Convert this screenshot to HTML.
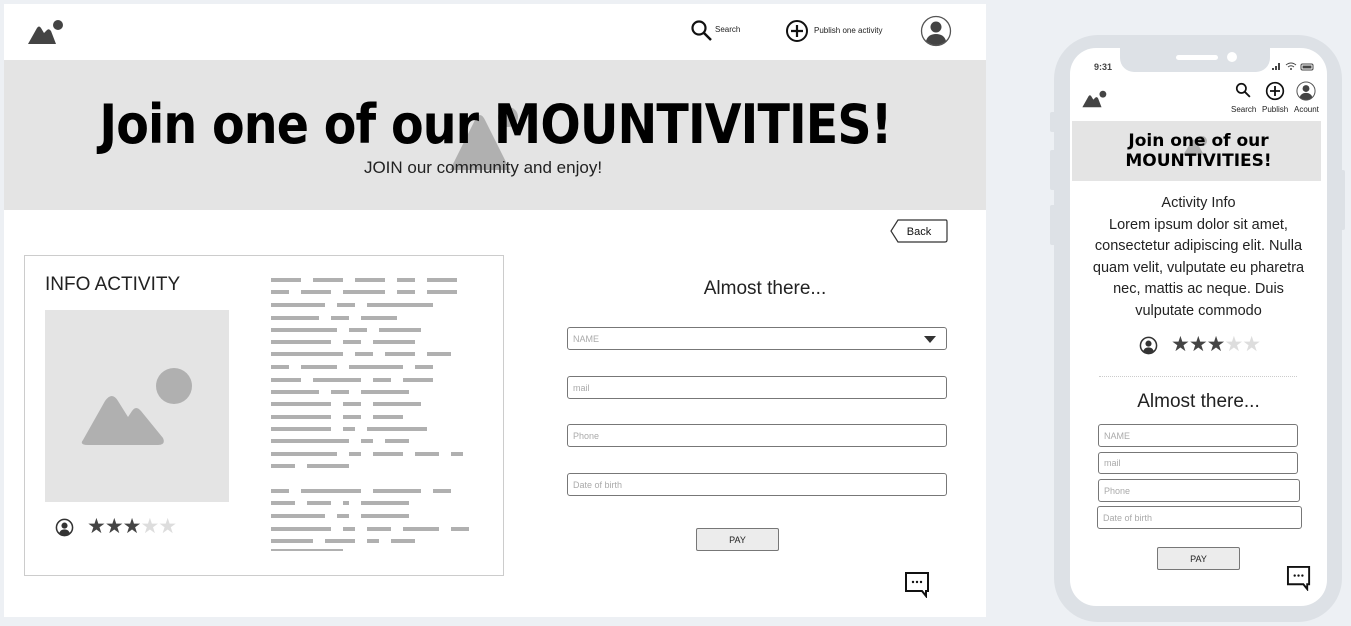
<!DOCTYPE html>
<html><head><meta charset="utf-8"><style>
*{margin:0;padding:0;box-sizing:border-box}
body{width:1351px;height:626px;background:#edf0f4;position:relative;overflow:hidden;font-family:"Liberation Sans",sans-serif}
.a{position:absolute}
.cond{font-family:"Liberation Sans Narrow","Liberation Sans",sans-serif}
.bars div{position:absolute;height:4px;background:#b0b0b0}
.inp{position:absolute;border:1px solid #777;border-radius:3px;background:#fff;font-size:9px;color:#aaa;padding-left:5px;display:flex;align-items:center}
.btn{position:absolute;border:1px solid #777;border-radius:2px;background:#ececec;font-size:9px;color:#222;display:flex;align-items:center;justify-content:center}
</style></head><body>
<!-- desktop -->
<div class="a" style="left:4px;top:4px;width:982px;height:613px;background:#fff"></div>
<svg class="a" style="left:26px;top:18px" width="38" height="28" viewBox="0 0 38 28"><path d="M2 26 L11 10 Q13 7 15 10 L18 15 L21 12 Q23 10 25 13 L30 26 Z" fill="#444"/><circle cx="32" cy="7" r="5" fill="#444"/></svg>
<svg class="a" style="left:690px;top:19px" width="24" height="24" viewBox="0 0 24 24"><circle cx="9" cy="9" r="6.5" fill="none" stroke="#111" stroke-width="2.2"/><path d="M14 14 L21 21" stroke="#111" stroke-width="2.5"/></svg>
<div class="a cond" style="left:715px;top:25px;font-size:8px;color:#222">Search</div>
<svg class="a" style="left:785px;top:19px" width="24" height="24" viewBox="0 0 24 24"><circle cx="12" cy="12" r="10" fill="none" stroke="#111" stroke-width="2"/><path d="M12 6v12M6 12h12" stroke="#111" stroke-width="2.2"/></svg>
<div class="a cond" style="left:814px;top:26px;font-size:8px;color:#222">Publish one activity</div>
<svg class="a" style="left:920px;top:15px" width="32" height="32" viewBox="0 0 32 32"><circle cx="16" cy="16" r="14.5" fill="#fff" stroke="#555" stroke-width="1.3"/><circle cx="16" cy="12" r="5.5" fill="#444"/><path d="M6 26 Q8 19 16 19 Q24 19 26 26 Q21 30 16 30 Q11 30 6 26Z" fill="#444"/></svg>
<div class="a" style="left:4px;top:60px;width:982px;height:150px;background:#e4e4e4"></div>
<svg class="a" style="left:445px;top:105px" width="90" height="70" viewBox="0 0 90 70"><path d="M5 65 L30 15 Q35 5 40 15 L65 65 Z" fill="#b0b0b0"/><circle cx="63" cy="12" r="10" fill="#b0b0b0"/></svg>
<div class="a" style="left:4px;top:90px;width:982px;text-align:center;font-family:'DejaVu Sans',sans-serif;font-weight:bold;font-size:54px;letter-spacing:-1px;color:#000;line-height:70px;transform:scaleX(0.88);transform-origin:495px 0">Join one of our MOUNTIVITIES!</div>
<div class="a cond" style="left:4px;top:158px;width:958px;text-align:center;font-size:17px;color:#222">JOIN our community and enjoy!</div>
<!-- back -->
<svg class="a" style="left:889px;top:219px" width="60" height="25" viewBox="0 0 60 25"><path d="M9 1 H57 Q58 1 58 3 V21 Q58 23 56 23 H9 L2 12 Z" fill="#fff" stroke="#333" stroke-width="1.2"/><text x="30" y="16" font-size="11" font-family="Liberation Sans" fill="#111" text-anchor="middle">Back</text></svg>
<!-- info card -->
<div class="a" style="left:24px;top:255px;width:480px;height:321px;border:1px solid #ccc"></div>
<div class="a cond" style="left:45px;top:274px;font-size:19px;color:#222">INFO ACTIVITY</div>
<div class="a" style="left:45px;top:310px;width:184px;height:192px;background:#e4e4e4"></div>
<svg class="a" style="left:78px;top:365px" width="120" height="82" viewBox="0 0 120 82"><path d="M5 75 L27 36 Q34 26 40 36 L50 52 L54 46 Q58 40 63 46 L85 73 Q88 80 80 80 H10 Q1 80 5 75Z" fill="#b0b0b0"/><circle cx="96" cy="21" r="18" fill="#b0b0b0"/></svg>
<svg class="a" style="left:55px;top:518px" width="19" height="19" viewBox="0 0 20 20"><circle cx="10" cy="10" r="8.5" fill="none" stroke="#333" stroke-width="1.6"/><circle cx="10" cy="8" r="3.2" fill="#333"/><path d="M4.5 15.5 Q6 12 10 12 Q14 12 15.5 15.5 Q13 18 10 18 Q7 18 4.5 15.5Z" fill="#333"/></svg>
<div class="a" style="left:87px;top:514px;font-size:21px;letter-spacing:-1px;color:#444;font-family:'DejaVu Sans',sans-serif">★★★<span style="color:#ddd">★★</span></div>
<!-- form -->
<div class="a cond" style="left:540px;top:278px;width:450px;text-align:center;font-size:19px;color:#222">Almost there...</div>
<div class="inp" style="left:567px;top:327px;width:380px;height:23px">NAME</div>
<svg class="a" style="left:923px;top:335px" width="14" height="9"><path d="M1 1 H13 L7 8Z" fill="#333"/></svg>
<div class="inp" style="left:567px;top:376px;width:380px;height:23px">mail</div>
<div class="inp" style="left:567px;top:424px;width:380px;height:23px">Phone</div>
<div class="inp" style="left:567px;top:473px;width:380px;height:23px">Date of birth</div>
<div class="btn" style="left:696px;top:528px;width:83px;height:23px">PAY</div>
<svg class="a" style="left:904px;top:571px" width="28" height="27" viewBox="0 0 28 27"><path d="M2 2 H24 V20 H22 V25 L18 20 H2 Z" fill="#fff" stroke="#111" stroke-width="2"/><circle cx="9" cy="11" r="1.2" fill="#111"/><circle cx="13" cy="11" r="1.2" fill="#111"/><circle cx="17" cy="11" r="1.2" fill="#111"/></svg>
<!-- phone -->
<div class="a" style="left:1050px;top:112px;width:6px;height:20px;background:#dde1e6;border-radius:2px"></div>
<div class="a" style="left:1050px;top:150px;width:6px;height:40px;background:#dde1e6;border-radius:2px"></div>
<div class="a" style="left:1050px;top:205px;width:6px;height:40px;background:#dde1e6;border-radius:2px"></div>
<div class="a" style="left:1340px;top:170px;width:5px;height:60px;background:#dde1e6;border-radius:2px"></div>
<div class="a" style="left:1054px;top:35px;width:288px;height:587px;background:#dde1e6;border-radius:44px"></div>
<div class="a" style="left:1070px;top:48px;width:257px;height:558px;background:#fff;border-radius:26px"></div>
<div class="a" style="left:1120px;top:44px;width:150px;height:28px;background:#dde1e6;border-radius:0 0 14px 14px"></div>
<div class="a" style="left:1176px;top:55px;width:42px;height:5px;background:#fff;border-radius:3px"></div>
<div class="a" style="left:1227px;top:52px;width:10px;height:10px;background:#fff;border-radius:50%"></div>
<div class="a" style="left:1094px;top:62px;font-size:9px;font-weight:bold;color:#444">9:31</div>
<svg class="a" style="left:1272px;top:61px" width="44" height="10" viewBox="0 0 44 10"><rect x="0" y="7" width="2" height="2" fill="#444"/><rect x="3" y="5" width="2" height="4" fill="#444"/><rect x="6" y="2" width="2" height="7" fill="#444"/><path d="M14 4 Q19 0 24 4 M16 6 Q19 3.5 22 6" fill="none" stroke="#444" stroke-width="1"/><circle cx="19" cy="8" r="1" fill="#444"/><rect x="29" y="3" width="12" height="6" rx="1.5" fill="none" stroke="#444"/><rect x="30.5" y="4.5" width="9" height="3" fill="#444"/></svg>
<svg class="a" style="left:1081px;top:89px" width="26" height="20" viewBox="0 0 38 28"><path d="M2 26 L11 10 Q13 7 15 10 L18 15 L21 12 Q23 10 25 13 L30 26 Z" fill="#444"/><circle cx="32" cy="7" r="5" fill="#444"/></svg>
<svg class="a" style="left:1235px;top:82px" width="17" height="17" viewBox="0 0 24 24"><circle cx="9" cy="9" r="6.5" fill="none" stroke="#111" stroke-width="2.4"/><path d="M14 14 L21 21" stroke="#111" stroke-width="2.6"/></svg>
<svg class="a" style="left:1265px;top:81px" width="20" height="20" viewBox="0 0 24 24"><circle cx="12" cy="12" r="10" fill="none" stroke="#111" stroke-width="2"/><path d="M12 6v12M6 12h12" stroke="#111" stroke-width="2.2"/></svg>
<svg class="a" style="left:1296px;top:81px" width="20" height="20" viewBox="0 0 32 32"><circle cx="16" cy="16" r="14.5" fill="#fff" stroke="#555" stroke-width="1.6"/><circle cx="16" cy="12" r="5.5" fill="#444"/><path d="M6 26 Q8 19 16 19 Q24 19 26 26 Q21 30 16 30 Q11 30 6 26Z" fill="#444"/></svg>
<div class="a cond" style="left:1231px;top:105px;font-size:8px;color:#222">Search</div>
<div class="a cond" style="left:1262px;top:105px;font-size:8px;color:#222">Publish</div>
<div class="a cond" style="left:1294px;top:105px;font-size:8px;color:#222">Acount</div>
<div class="a" style="left:1072px;top:121px;width:249px;height:60px;background:#e4e4e4"></div>
<svg class="a" style="left:1180px;top:135px" width="30" height="22" viewBox="0 0 30 22"><path d="M3 20 L12 6 Q14 3 16 6 L24 20Z" fill="#b0b0b0"/><circle cx="22" cy="6" r="5" fill="#b0b0b0"/></svg>
<div class="a" style="left:1072px;top:131px;width:253px;text-align:center;font-family:'DejaVu Sans',sans-serif;font-weight:bold;font-size:17px;line-height:20px;color:#000">Join one of our<br>MOUNTIVITIES!</div>
<div class="a cond" style="left:1072px;top:193px;width:253px;text-align:center;font-size:14.5px;line-height:21.5px;color:#222">Activity Info<br>Lorem ipsum dolor sit amet,<br>consectetur adipiscing elit. Nulla<br>quam velit, vulputate eu pharetra<br>nec, mattis ac neque. Duis<br>vulputate commodo</div>
<svg class="a" style="left:1139px;top:336px" width="19" height="19" viewBox="0 0 20 20"><circle cx="10" cy="10" r="8.5" fill="none" stroke="#333" stroke-width="1.6"/><circle cx="10" cy="8" r="3.2" fill="#333"/><path d="M4.5 15.5 Q6 12 10 12 Q14 12 15.5 15.5 Q13 18 10 18 Q7 18 4.5 15.5Z" fill="#333"/></svg>
<div class="a" style="left:1171px;top:332px;font-size:21px;letter-spacing:-1px;color:#444;font-family:'DejaVu Sans',sans-serif">★★★<span style="color:#ddd">★★</span></div>
<div class="a" style="left:1099px;top:376px;width:198px;border-top:1px dotted #ccc"></div>
<div class="a cond" style="left:1072px;top:391px;width:253px;text-align:center;font-size:19px;color:#222">Almost there...</div>
<div class="inp" style="left:1098px;top:424px;width:200px;height:23px">NAME</div>
<div class="inp" style="left:1098px;top:452px;width:200px;height:22px">mail</div>
<div class="inp" style="left:1098px;top:479px;width:202px;height:23px">Phone</div>
<div class="inp" style="left:1097px;top:506px;width:205px;height:23px">Date of birth</div>
<div class="btn" style="left:1157px;top:547px;width:83px;height:23px">PAY</div>
<svg class="a" style="left:1286px;top:565px" width="27" height="26" viewBox="0 0 28 27"><path d="M2 2 H24 V20 H22 V25 L18 20 H2 Z" fill="#fff" stroke="#111" stroke-width="2"/><circle cx="9" cy="11" r="1.2" fill="#111"/><circle cx="13" cy="11" r="1.2" fill="#111"/><circle cx="17" cy="11" r="1.2" fill="#111"/></svg>
<div class="bars">
<script>
var rows=[[278,[30,30,30,18,30]],[290,[18,30,42,18,30]],[303,[54,18,66]],[316,[48,18,36]],[328,[66,18,42]],[340,[60,18,42]],[352,[72,18,30,24]],[365,[18,36,54,18]],[378,[30,48,18,30]],[390,[48,18,48]],[402,[60,18,48]],[415,[60,18,30]],[427,[60,12,60]],[439,[78,12,24]],[452,[66,12,30,24,12]],[464,[24,42]],[489,[18,60,48,18]],[501,[24,24,6,48]],[514,[54,12,48]],[527,[60,12,24,36,18]],[539,[42,30,12,24]]];
var h='';rows.forEach(function(r){var x=271;r[1].forEach(function(w){h+='<div style="left:'+x+'px;top:'+r[0]+'px;width:'+w+'px"></div>';x+=w+12;});});
h+='<div style="left:271px;top:549px;width:72px;height:2px"></div>';
document.write(h);
</script>
</div>
</body></html>
